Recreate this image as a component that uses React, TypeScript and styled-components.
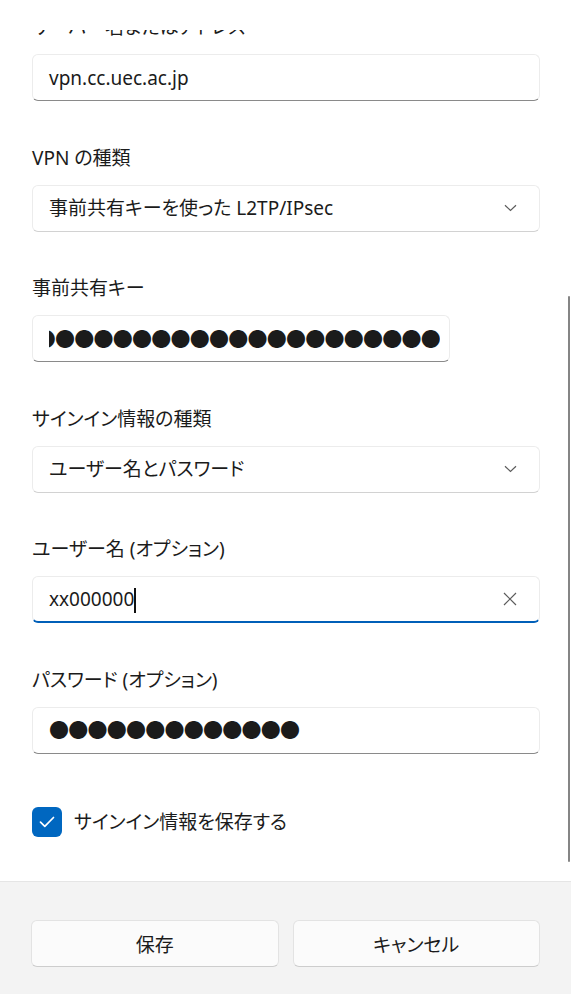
import React from "react";
import styled, { createGlobalStyle } from "styled-components";

const Global = createGlobalStyle`
  html, body { margin: 0; padding: 0; background: #ffffff; }
  body {
    font-family: "Noto Sans", "Noto Sans CJK JP", sans-serif;
    color: #1b1b1b;
  }
  * { box-sizing: border-box; }
`;

const Window = styled.div`
  width: 571px;
  height: 994px;
  display: flex;
  flex-direction: column;
  background: #ffffff;
  overflow: hidden;
`;

const TopCover = styled.div`
  height: 30px;
  flex: none;
  background: #ffffff;
  position: relative;
  z-index: 2;
`;

const ScrollArea = styled.div`
  flex: 1;
  position: relative;
  overflow: hidden;
  border-bottom: 1px solid #e5e5e5;
`;

const ScrollThumb = styled.div`
  position: absolute;
  right: 1px;
  top: 266px;
  width: 2px;
  height: 566px;
  border-radius: 1px;
  background: #858585;
`;

const Content = styled.div`
  margin-top: -17px;
  padding: 0 31px 0 32px;
  display: flex;
  flex-direction: column;
  gap: 42.6px;
`;

const Group = styled.div`
  display: flex;
  flex-direction: column;
  gap: 13px;
`;

const Label = styled.div`
  font-family: "Noto Sans", "Noto Sans CJK JP", sans-serif;
  font-feature-settings: "palt";
  font-size: 19px;
  line-height: 28px;
  color: #1b1b1b;
`;

type Variant = "text" | "select" | "focus";

const Field = styled.div<{ $variant: Variant; $width?: number; $padRight?: number }>`
  height: 47px;
  width: ${(p) => (p.$width ? `${p.$width}px` : "100%")};
  display: flex;
  align-items: center;
  padding: 0 ${(p) => (p.$padRight ?? 22)}px 0 16px;
  background: #ffffff;
  border: 1px solid #ececec;
  border-radius: 6px;
  border-bottom: ${(p) =>
    p.$variant === "focus"
      ? "2px solid #005fb8"
      : p.$variant === "select"
      ? "1px solid #d2d2d2"
      : "1px solid #8a8a8a"};
  font-size: 19px;
  color: #1b1b1b;
  font-feature-settings: "palt";
`;

const FieldText = styled.span`
  flex: 1;
  white-space: nowrap;
  line-height: 28px;
`;

const Caret = styled.span`
  display: inline-block;
  width: 1.5px;
  height: 25px;
  background: #111;
  vertical-align: middle;
  position: relative;
  top: -1px;
`;

const DotsClip = styled.div<{ $end?: boolean }>`
  flex: 1;
  min-width: 0;
  display: flex;
  justify-content: ${(p) => (p.$end ? "flex-end" : "flex-start")};
  overflow: hidden;
  white-space: nowrap;
`;

const Dots = styled.span`
  flex: none;
  font-family: "Noto Sans CJK JP", sans-serif;
  font-size: 20px;
  letter-spacing: -0.75px;
  line-height: 28px;
  color: #1b1b1b;
  font-feature-settings: normal;
`;

const IconSlot = styled.span`
  display: flex;
  align-items: center;
  justify-content: center;
  width: 14px;
  height: 14px;
  flex: none;
`;

const CheckRow = styled.div`
  display: flex;
  align-items: center;
  gap: 12px;
  margin-top: 10px;
  padding-bottom: 40px;
`;

const CheckBox = styled.span`
  width: 30px;
  height: 30px;
  border-radius: 6px;
  background: #0067c0;
  display: flex;
  align-items: center;
  justify-content: center;
  flex: none;
`;

const CheckLabel = styled.span`
  font-size: 19px;
  line-height: 28px;
  font-feature-settings: "palt";
  color: #1b1b1b;
`;

const Footer = styled.div`
  flex: none;
  height: 112px;
  background: #f3f3f3;
  padding: 38px 31px 0 31px;
  display: grid;
  grid-template-columns: 1fr 1fr;
  column-gap: 14px;
  align-content: start;
`;

const Button = styled.button`
  height: 47px;
  border-radius: 6px;
  background: #fbfbfb;
  border: 1px solid #e3e3e3;
  border-bottom: 1px solid #cdcdcd;
  font-family: "Noto Sans", "Noto Sans CJK JP", sans-serif;
  font-feature-settings: "palt";
  font-size: 19px;
  color: #1b1b1b;
  padding: 0;
  display: flex;
  align-items: center;
  justify-content: center;
`;

const Chevron = () => (
  <svg width="13" height="8" viewBox="0 0 13 8">
    <path d="M1 1.2 L6.5 6.5 L12 1.2" fill="none" stroke="#5c5c5c" strokeWidth="1.2" />
  </svg>
);

const Cross = () => (
  <svg width="14" height="14" viewBox="0 0 14 14">
    <path d="M1 1 L13 13 M13 1 L1 13" fill="none" stroke="#5c5c5c" strokeWidth="1.2" />
  </svg>
);

const Tick = () => (
  <svg width="16" height="12" viewBox="0 0 16 12">
    <path d="M1.5 6.2 L5.8 10.3 L14.5 1.5" fill="none" stroke="#ffffff" strokeWidth="1.7" strokeLinecap="round" strokeLinejoin="round" />
  </svg>
);

export default function App() {
  return (
    <>
      <Global />
      <Window>
        <TopCover />
        <ScrollArea>
          <Content>
            <Group>
              <Label>サーバー名またはアドレス</Label>
              <Field $variant="text">
                <FieldText>vpn.cc.uec.ac.jp</FieldText>
              </Field>
            </Group>
            <Group>
              <Label>VPN の種類</Label>
              <Field $variant="select">
                <FieldText>事前共有キーを使った L2TP/IPsec</FieldText>
                <IconSlot>
                  <Chevron />
                </IconSlot>
              </Field>
            </Group>
            <Group>
              <Label>事前共有キー</Label>
              <Field $variant="text" $width={418} $padRight={9}>
                <DotsClip $end>
                  <Dots>{"●".repeat(22)}</Dots>
                </DotsClip>
              </Field>
            </Group>
            <Group>
              <Label>サインイン情報の種類</Label>
              <Field $variant="select">
                <FieldText>ユーザー名とパスワード</FieldText>
                <IconSlot>
                  <Chevron />
                </IconSlot>
              </Field>
            </Group>
            <Group>
              <Label>ユーザー名 (オプション)</Label>
              <Field $variant="focus">
                <FieldText>
                  xx000000
                  <Caret />
                </FieldText>
                <IconSlot>
                  <Cross />
                </IconSlot>
              </Field>
            </Group>
            <Group>
              <Label>パスワード (オプション)</Label>
              <Field $variant="text">
                <DotsClip>
                  <Dots>{"●".repeat(13)}</Dots>
                </DotsClip>
              </Field>
            </Group>
            <CheckRow>
              <CheckBox>
                <Tick />
              </CheckBox>
              <CheckLabel>サインイン情報を保存する</CheckLabel>
            </CheckRow>
          </Content>
          <ScrollThumb />
        </ScrollArea>
        <Footer>
          <Button>保存</Button>
          <Button>キャンセル</Button>
        </Footer>
      </Window>
    </>
  );
}
